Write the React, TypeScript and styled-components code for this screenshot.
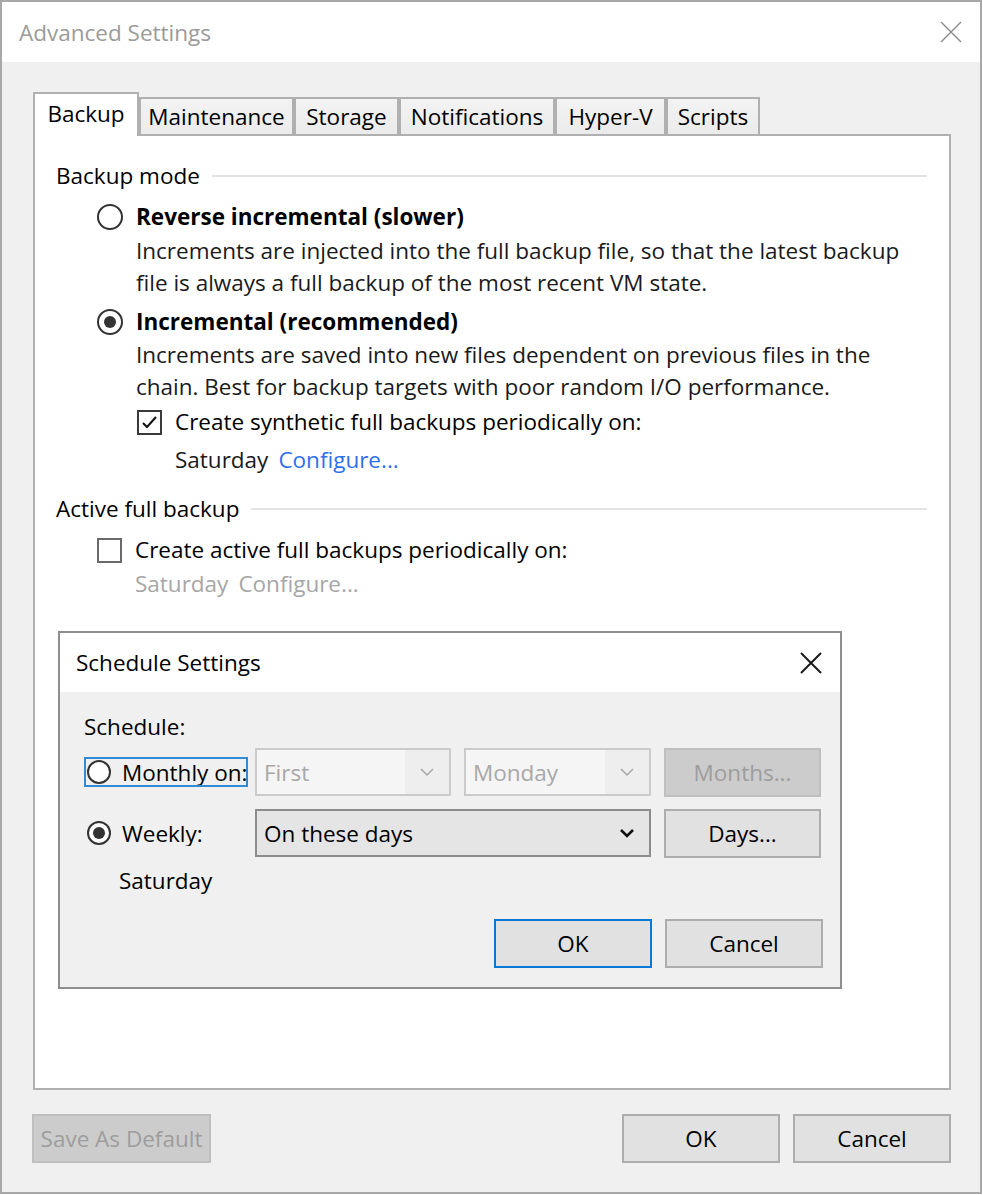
import React from 'react';
import styled, { createGlobalStyle } from 'styled-components';

const GlobalStyle = createGlobalStyle`
  html, body {
    margin: 0;
    padding: 0;
    background: #ffffff;
  }
  body {
    font-family: "Open Sans", "Noto Sans", sans-serif;
    font-size: 22.5px;
    color: #000000;
  }
  * {
    box-sizing: border-box;
  }
`;

type TabType = {
  label: string;
  width: number;
  active?: boolean;
};

const tabs: TabType[] = [
  { label: 'Backup', width: 106, active: true },
  { label: 'Maintenance', width: 155 },
  { label: 'Storage', width: 105 },
  { label: 'Notifications', width: 156 },
  { label: 'Hyper-V', width: 111 },
  { label: 'Scripts', width: 94 },
];

const Window = styled.div`
  position: relative;
  width: 982px;
  height: 1194px;
  border: 2px solid #a8a8a8;
  background: #f0f0f0;
  display: flex;
  flex-direction: column;
`;

const TitleBar = styled.div`
  height: 60px;
  flex-shrink: 0;
  background: #ffffff;
  display: flex;
  align-items: center;
  justify-content: space-between;
  padding: 0 18px 0 17px;
`;

const WindowTitle = styled.div`
  color: #9b9b9b;
`;

const CloseButton = styled.div<{ $dark?: boolean }>`
  width: 22px;
  height: 22px;
  display: flex;
  align-items: center;
  justify-content: center;
  color: ${(p) => (p.$dark ? '#1a1a1a' : '#8a8a8a')};
`;

const Body = styled.div`
  flex: 1;
  display: flex;
  flex-direction: column;
  padding: 30px 29px 0 31px;
`;

const TabStrip = styled.div`
  height: 42px;
  display: flex;
  align-items: flex-end;
`;

const Tab = styled.div<{ $active?: boolean; $width: number }>`
  position: relative;
  z-index: ${(p) => (p.$active ? 1 : 0)};
  width: ${(p) => p.$width}px;
  height: ${(p) => (p.$active ? 44 : 37)}px;
  margin-bottom: ${(p) => (p.$active ? -2 : 0)}px;
  padding-bottom: ${(p) => (p.$active ? 4 : 0)}px;
  border: 2px solid #b0b0b0;
  border-bottom: none;
  border-left-width: ${(p) => (p.$active ? 2 : 0)}px;
  background: ${(p) => (p.$active ? '#ffffff' : 'linear-gradient(#f3f3f3, #ebebeb)')};
  display: flex;
  align-items: center;
  justify-content: center;
  white-space: nowrap;
  & + & {
    border-left-width: 2px;
  }
`;

const Panel = styled.div`
  height: 956px;
  background: #ffffff;
  border: 2px solid #b0b0b0;
  padding: 24px 21px 0 21px;
`;

const GroupHeader = styled.div<{ $gap?: number }>`
  display: flex;
  align-items: center;
  gap: 12px;
  line-height: 32px;
  margin-top: ${(p) => p.$gap || 0}px;
  margin-right: 1px;
  &::after {
    content: '';
    flex: 1;
    height: 2px;
    background: #e3e3e3;
  }
`;

const Option = styled.div<{ $gap?: number }>`
  margin-left: 41px;
  margin-top: ${(p) => p.$gap || 0}px;
`;

const OptionRow = styled.div<{ $gap?: number; $indent?: number }>`
  display: flex;
  align-items: center;
  gap: 13px;
  line-height: 32px;
  margin-top: ${(p) => p.$gap || 0}px;
  margin-left: ${(p) => p.$indent || 0}px;
`;

const OptionTitle = styled.span`
  font-weight: 700;
`;

const Description = styled.div<{ $gap?: number }>`
  margin-left: 39px;
  margin-top: ${(p) => p.$gap || 0}px;
  line-height: 32px;
  color: #1a1a1a;
`;

const Line = styled.div`
  white-space: nowrap;
`;

const RadioCircle = styled.span<{ $size?: number; $checked?: boolean }>`
  flex-shrink: 0;
  width: ${(p) => p.$size || 26}px;
  height: ${(p) => p.$size || 26}px;
  border-radius: 50%;
  border: 2px solid #333333;
  background: #ffffff;
  display: flex;
  align-items: center;
  justify-content: center;
  &::after {
    content: '';
    display: ${(p) => (p.$checked ? 'block' : 'none')};
    width: 12px;
    height: 12px;
    border-radius: 50%;
    background: #333333;
  }
`;

const CheckBox = styled.span<{ $checked?: boolean }>`
  flex-shrink: 0;
  width: 25px;
  height: 25px;
  border: 2px solid ${(p) => (p.$checked ? '#3a3a3a' : '#6a6a6a')};
  background: #ffffff;
  display: flex;
  align-items: center;
  justify-content: center;
`;

const ScheduleLine = styled.div<{ $disabled?: boolean; $indent: number; $gap?: number }>`
  display: flex;
  gap: 10px;
  line-height: 32px;
  margin-left: ${(p) => p.$indent}px;
  margin-top: ${(p) => p.$gap || 0}px;
  color: ${(p) => (p.$disabled ? '#a6a6a6' : '#1a1a1a')};
`;

const Link = styled.span<{ $disabled?: boolean }>`
  color: ${(p) => (p.$disabled ? '#a6a6a6' : '#2f6fec')};
`;

const Footer = styled.div`
  display: flex;
  align-items: center;
  gap: 13px;
  margin-top: 24px;
  margin-left: -1px;
`;

const Spacer = styled.div`
  flex: 1;
`;

const Button = styled.div<{ $disabled?: boolean; $default?: boolean; $width: number }>`
  width: ${(p) => p.$width}px;
  height: 49px;
  display: flex;
  align-items: center;
  justify-content: center;
  background: ${(p) => (p.$disabled ? '#cccccc' : '#e1e1e1')};
  border: 2px solid ${(p) => (p.$default ? '#0a78d4' : p.$disabled ? '#bfbfbf' : '#adadad')};
  color: ${(p) => (p.$disabled ? '#9d9d9d' : '#000000')};
  white-space: nowrap;
`;

/* Schedule Settings dialog floats over the tab panel */
const Dialog = styled.div`
  position: absolute;
  left: 56px;
  top: 629px;
  width: 784px;
  height: 358px;
  border: 2px solid #8e8e8e;
  background: #f0f0f0;
  display: flex;
  flex-direction: column;
`;

const DialogTitleBar = styled.div`
  height: 59px;
  background: #ffffff;
  display: flex;
  align-items: center;
  justify-content: space-between;
  padding: 0 18px 0 16px;
`;

const DialogBody = styled.div`
  padding: 19px 17px 0 24px;
`;

const FieldLabel = styled.div`
  line-height: 32px;
`;

const ScheduleGrid = styled.div`
  display: grid;
  grid-template-columns: 158px 196px 187px 157px;
  grid-auto-rows: 48px;
  column-gap: 13px;
  row-gap: 13px;
  margin-top: 5px;
`;

const RadioLabel = styled.div<{ $focused?: boolean }>`
  align-self: center;
  height: 30px;
  width: 164px;
  display: flex;
  align-items: center;
  gap: 11px;
  padding-left: 1px;
  border: 2px solid ${(p) => (p.$focused ? '#2f8bd6' : 'transparent')};
  white-space: nowrap;
  overflow: hidden;
`;

const Combo = styled.div<{ $disabled?: boolean; $span?: number }>`
  grid-column: span ${(p) => p.$span || 1};
  display: flex;
  border: 2px solid ${(p) => (p.$disabled ? '#cbcbcb' : '#8c8c8c')};
  background: ${(p) => (p.$disabled ? '#f5f5f5' : '#e5e5e5')};
  color: ${(p) => (p.$disabled ? '#a8a8a8' : '#000000')};
`;

const ComboText = styled.div`
  flex: 1;
  display: flex;
  align-items: center;
  padding-left: 7px;
`;

const ComboArrow = styled.div<{ $disabled?: boolean }>`
  width: 44px;
  display: flex;
  align-items: center;
  justify-content: center;
  background: ${(p) => (p.$disabled ? '#eeeeee' : 'transparent')};
  color: ${(p) => (p.$disabled ? '#a8a8a8' : '#111111')};
`;

const DayNote = styled.div`
  line-height: 32px;
  margin-top: 8px;
  margin-left: 35px;
`;

const DialogActions = styled.div`
  display: flex;
  justify-content: flex-end;
  gap: 13px;
  margin-top: 22px;
`;

const CloseIcon = ({ size, weight }: { size: number; weight: number }) => (
  <svg width={size} height={size} viewBox="0 0 22 22">
    <path d="M1 1 L21 21 M21 1 L1 21" stroke="currentColor" strokeWidth={weight} fill="none" />
  </svg>
);

const Chevron = ({ weight }: { weight: number }) => (
  <svg width="16" height="10" viewBox="0 0 16 10">
    <polyline points="2,2 8,8 14,2" stroke="currentColor" strokeWidth={weight} fill="none" />
  </svg>
);

const CheckMark = () => (
  <svg width="17" height="15" viewBox="0 0 17 15">
    <polyline points="2,8 6,12 15,2" stroke="#111" strokeWidth="2" fill="none" />
  </svg>
);

export default function App() {
  return (
    <>
      <GlobalStyle />
      <Window>
        <TitleBar>
          <WindowTitle>Advanced Settings</WindowTitle>
          <CloseButton>
            <CloseIcon size={22} weight={1.4} />
          </CloseButton>
        </TitleBar>

        <Body>
          <TabStrip>
            {tabs.map((t) => (
              <Tab key={t.label} $active={t.active} $width={t.width}>
                {t.label}
              </Tab>
            ))}
          </TabStrip>

          <Panel>
            <GroupHeader>Backup mode</GroupHeader>

            <Option $gap={9}>
              <OptionRow>
                <RadioCircle />
                <OptionTitle>Reverse incremental (slower)</OptionTitle>
              </OptionRow>
              <Description $gap={2}>
                <Line>Increments are injected into the full backup file, so that the latest backup</Line>
                <Line>file is always a full backup of the most recent VM state.</Line>
              </Description>
            </Option>

            <Option $gap={7}>
              <OptionRow>
                <RadioCircle $checked />
                <OptionTitle>Incremental (recommended)</OptionTitle>
              </OptionRow>
              <Description $gap={1}>
                <Line>Increments are saved into new files dependent on previous files in the</Line>
                <Line>chain. Best for backup targets with poor random I/O performance.</Line>
              </Description>
              <OptionRow $gap={3} $indent={40}>
                <CheckBox $checked>
                  <CheckMark />
                </CheckBox>
                Create synthetic full backups periodically on:
              </OptionRow>
              <ScheduleLine $indent={78} $gap={6}>
                <span>Saturday</span>
                <Link>Configure...</Link>
              </ScheduleLine>
            </Option>

            <GroupHeader $gap={17}>Active full backup</GroupHeader>

            <Option $gap={9}>
              <OptionRow>
                <CheckBox />
                Create active full backups periodically on:
              </OptionRow>
              <ScheduleLine $indent={38} $gap={2} $disabled>
                <span>Saturday</span>
                <Link $disabled>Configure...</Link>
              </ScheduleLine>
            </Option>
          </Panel>

          <Footer>
            <Button $disabled $width={179}>
              Save As Default
            </Button>
            <Spacer />
            <Button $width={158}>OK</Button>
            <Button $width={158}>Cancel</Button>
          </Footer>
        </Body>

        <Dialog>
          <DialogTitleBar>
            <div>Schedule Settings</div>
            <CloseButton $dark>
              <CloseIcon size={22} weight={2} />
            </CloseButton>
          </DialogTitleBar>
          <DialogBody>
            <FieldLabel>Schedule:</FieldLabel>
            <ScheduleGrid>
              <RadioLabel $focused>
                <RadioCircle $size={24} />
                Monthly on:
              </RadioLabel>
              <Combo $disabled>
                <ComboText>First</ComboText>
                <ComboArrow $disabled>
                  <Chevron weight={1.5} />
                </ComboArrow>
              </Combo>
              <Combo $disabled>
                <ComboText>Monday</ComboText>
                <ComboArrow $disabled>
                  <Chevron weight={1.5} />
                </ComboArrow>
              </Combo>
              <Button $disabled $width={157}>
                Months...
              </Button>

              <RadioLabel>
                <RadioCircle $size={24} $checked />
                Weekly:
              </RadioLabel>
              <Combo $span={2}>
                <ComboText>On these days</ComboText>
                <ComboArrow>
                  <Chevron weight={2.6} />
                </ComboArrow>
              </Combo>
              <Button $width={157}>Days...</Button>
            </ScheduleGrid>
            <DayNote>Saturday</DayNote>
            <DialogActions>
              <Button $default $width={158}>
                OK
              </Button>
              <Button $width={158}>Cancel</Button>
            </DialogActions>
          </DialogBody>
        </Dialog>
      </Window>
    </>
  );
}
